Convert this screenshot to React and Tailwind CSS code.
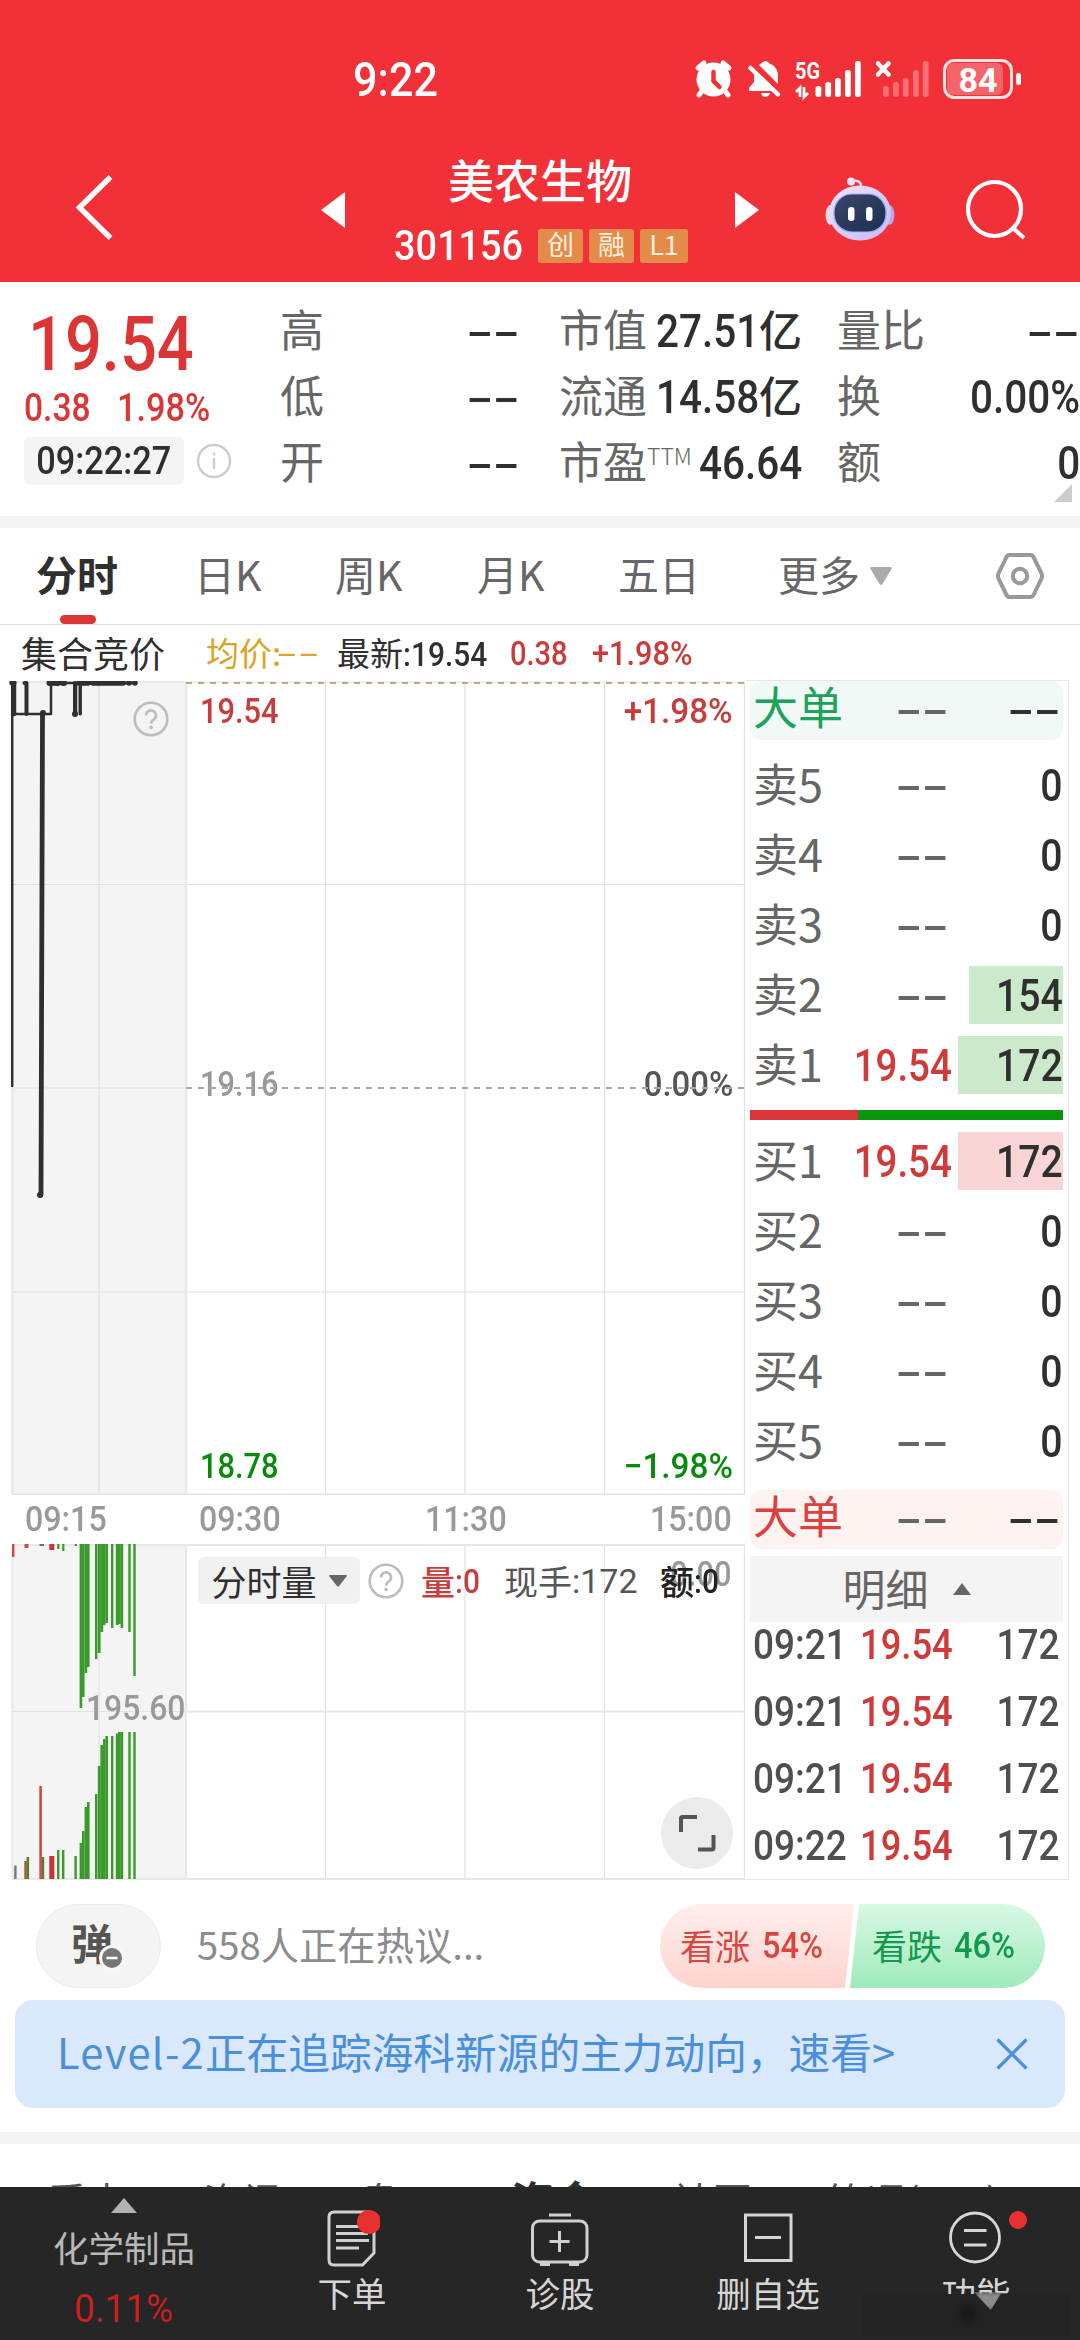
import clsx from "clsx";

const asks = [
  { label: "卖5", qty: "0" },
  { label: "卖4", qty: "0" },
  { label: "卖3", qty: "0" },
  { label: "卖2", qty: "154", bar: "w-[94px]" },
  { label: "卖1", price: "19.54", qty: "172", bar: "w-[105px]" },
];

const bids = [
  { label: "买1", price: "19.54", qty: "172", bar: "w-[105px]" },
  { label: "买2", qty: "0" },
  { label: "买3", qty: "0" },
  { label: "买4", qty: "0" },
  { label: "买5", qty: "0" },
];

const ticks = [
  ["09:21", "19.54", "172"],
  ["09:21", "19.54", "172"],
  ["09:21", "19.54", "172"],
  ["09:22", "19.54", "172"],
];

const RED = "#cf4a48";
const GREEN = "#3a9a2c";

// [x, width, height, color]
const unmatched = [
  [12, 2.4, 13, RED],
  [24.5, 4, 4, RED],
  [39.5, 4.5, 2, "#8a6a3a"],
  [49.3, 5, 6, "#c8343a"],
  [57.2, 2.2, 5, GREEN],
  [62.2, 2.2, 7, GREEN],
  [74.7, 2.2, 2, GREEN],
  [79.6, 2.6, 164, GREEN],
  [82, 2.6, 153, GREEN],
  [84.6, 2.6, 129, GREEN],
  [87, 2.6, 123, GREEN],
  [95, 2.4, 115, GREEN],
  [97.8, 2.8, 109, GREEN],
  [100.4, 2.8, 88, GREEN],
  [103, 2.6, 81, GREEN],
  [105.4, 2.6, 79, GREEN],
  [111, 2.4, 84, GREEN],
  [115.8, 2.6, 81, GREEN],
  [118, 2.8, 80, GREEN],
  [120.6, 2.6, 84, GREEN],
  [128.3, 2.4, 88, GREEN],
  [133.3, 2.4, 132, GREEN],
];

const matched = [
  [14.2, 2.4, 13.5, "#777"],
  [24.3, 2.5, 18, "#a8572c"],
  [26.6, 2.5, 22, "#5d7a2c"],
  [39.3, 2.6, 93, RED],
  [41.8, 2.4, 22, "#5d7a2c"],
  [49.3, 5, 23, "#c8343a"],
  [57, 2.4, 29, GREEN],
  [62, 2.4, 29, GREEN],
  [74.4, 2.4, 23, GREEN],
  [79.6, 2.6, 36, GREEN],
  [82, 2.6, 48, GREEN],
  [84.6, 2.6, 72, GREEN],
  [87, 2.6, 77, GREEN],
  [95, 2.4, 85, GREEN],
  [97.8, 2.8, 113, GREEN],
  [100.4, 2.8, 134, GREEN],
  [103, 2.6, 140, GREEN],
  [105.4, 2.6, 143, GREEN],
  [111, 2.4, 143, GREEN],
  [115.8, 2.6, 145.5, GREEN],
  [118, 2.8, 147, GREEN],
  [120.6, 2.6, 147, GREEN],
  [128.3, 2.4, 147, GREEN],
  [133.3, 2.4, 147, GREEN],
];

// condensed digits
const Num = ({ className, right, children }) => (
  <span
    className={clsx(
      "inline-block shrink-0 scale-x-[.88] whitespace-nowrap font-['Roboto','Noto_Sans_CJK_SC',sans-serif] font-medium leading-none",
      right ? "origin-right" : "origin-left",
      className
    )}
  >
    {children}
  </span>
);

const Dash = ({ className }) => (
  <span
    className={clsx(
      "inline-block origin-right scale-x-[2.35] font-['Liberation_Sans',sans-serif] text-[34px] font-bold leading-none",
      className
    )}
  >
    --
  </span>
);

const Question = ({ className }) => (
  <svg viewBox="0 0 36 36" className={clsx("h-9 w-9", className)} fill="none" stroke="#bdbdbd" strokeWidth="2.6">
    <circle cx="18" cy="18" r="16.3" />
    <path d="M13 14.5a5 5 0 1 1 7.6 4.2c-1.8 1.2-2.5 2-2.5 4" />
    <circle cx="18.1" cy="26.4" r="1.8" fill="#bdbdbd" stroke="none" />
  </svg>
);

const StatusBar = () => (
  <div className="flex h-[158px] items-start pt-[55px] text-white">
    <Num className="ml-[353px] w-[90px] text-[49px]">9:22</Num>
    <svg viewBox="690 55 336 48" className="ml-[247px] h-12 w-[336px] shrink-0" fill="#fff">
      <circle cx="713.5" cy="79.500" r="17" />
      <g stroke="#fff" strokeWidth="5" strokeLinecap="round" fill="none">
        <path d="M698 68l6-5M729 68l-6-5M702 91l-3 4M725 91l3 4" />
      </g>
      <path d="M713.500 72v9l6 6" stroke="#f13037" strokeWidth="4.500" strokeLinecap="round" fill="none" />
      <path d="M764.500 61c2.500 0 4 1 5 2.500 6 2 8.500 7 8.500 12.500v8l-19-19zM756 71l20.500 20H749v-3l5-6v-5c0-2.500.500-4 2-6zM761 93h9c-.8 5-8 5-9 0z" />
      <path d="M750.500 68l27.500 26.500" stroke="#fff" strokeWidth="4.500" strokeLinecap="round" />
      <path d="M796 92l4-4v9M804 87v10l4-4M808 87" stroke="#fff" strokeWidth="2.800" fill="none" />
      <rect x="815.500" y="86" width="5.800" height="11" rx="2.500" />
      <rect x="825.300" y="82" width="5.800" height="15" rx="2.500" />
      <rect x="835" y="78" width="5.800" height="19" rx="2.500" />
      <rect x="845" y="70" width="5.800" height="27" rx="2.500" />
      <rect x="855" y="61" width="5.800" height="36" rx="2.500" />
      <path d="M878 63.500l10.500 11M888.500 63.500L878 74.500" stroke="#fff" strokeWidth="4.600" strokeLinecap="round" />
      <g opacity=".3">
        <rect x="883" y="86" width="5.800" height="11" rx="2.500" />
        <rect x="893" y="82" width="5.800" height="15" rx="2.500" />
        <rect x="902.800" y="78" width="5.800" height="19" rx="2.500" />
        <rect x="913" y="70" width="5.800" height="27" rx="2.500" />
        <rect x="922.800" y="61" width="5.800" height="36" rx="2.500" />
      </g>
      <text x="795" y="79" fontFamily="Roboto" fontWeight="700" fontSize="24" textLength="25" lengthAdjust="spacingAndGlyphs">5G</text>
      <rect x="947" y="63" width="56" height="32" rx="6" opacity=".25" />
      <rect x="944.500" y="60.500" width="67" height="37" rx="10" fill="none" stroke="#ffe3e3" strokeWidth="3" />
      <rect x="1016" y="73" width="5" height="12" rx="2.500" />
      <text x="958.500" y="91.500" fontFamily="Roboto" fontWeight="700" fontSize="34">84</text>
    </svg>
  </div>
);

const Robot = () => (
  <svg viewBox="0 0 70 66" className="h-[66px] w-[70px]">
    <defs>
      <linearGradient id="shell" x1="0" y1="0" x2="1" y2="1">
        <stop offset="0" stopColor="#f4e2fb" />
        <stop offset="1" stopColor="#c9b8f5" />
      </linearGradient>
      <linearGradient id="face" x1="0" y1="0" x2="1" y2="1">
        <stop offset="0" stopColor="#3a4566" />
        <stop offset="1" stopColor="#1c2f52" />
      </linearGradient>
    </defs>
    <circle cx="26" cy="5.500" r="4" fill="#e7e4fb" />
    <path d="M27 5.500c5-2 10 0 9 7" fill="none" stroke="#f1d9ee" strokeWidth="2.500" />
    <ellipse cx="5.500" cy="39" rx="5" ry="10" fill="#f0d7ea" />
    <ellipse cx="64.500" cy="39" rx="5" ry="10" fill="#b9a4e8" />
    <ellipse cx="35" cy="37" rx="31" ry="27.500" fill="url(#shell)" />
    <rect x="9" y="18" width="52" height="38" rx="18" fill="url(#face)" stroke="#8fb4ff" strokeWidth="1.200" />
    <rect x="23" y="31" width="6.500" height="14" rx="3.200" fill="#fff" />
    <rect x="41" y="31" width="6.500" height="14" rx="3.200" fill="#fff" />
  </svg>
);

const Header = () => (
  <header className="h-[282px] bg-[#f13037]">
    <StatusBar />
    <div className="flex h-[124px] items-start text-white">
      <svg viewBox="0 0 40 68" className="ml-[75px] mt-[15px] h-[68px] w-10" fill="none" stroke="#fff" strokeWidth="5.500">
        <path d="M35.500 4L4.500 34.500l31 30.500" />
      </svg>
      <svg viewBox="0 0 24 36" className="ml-[206px] mt-[34px] h-9 w-6" fill="#fff">
        <path d="M24 0v36L0 18z" />
      </svg>
      <div className="flex w-[390px] flex-col items-center">
        <h1 className="-mt-[3px] text-[46px] font-medium leading-[46px]">美农生物</h1>
        <div className="mt-[23px] flex items-center gap-1.5 pl-0.5 text-[27px] text-[#fff0dc]">
          <Num className="w-[138px] text-[43px] text-white">301156</Num>
          <span className="flex h-[34px] w-[45px] items-center justify-center rounded-[3px] bg-[#e58b4a] pb-1 leading-none">创</span>
          <span className="flex h-[34px] w-[45px] items-center justify-center rounded-[3px] bg-[#e58b4a] pb-1 leading-none">融</span>
          <span className="flex h-[34px] w-12 items-center justify-center rounded-[3px] bg-[#e58b4a] pb-1 leading-none">L1</span>
        </div>
      </div>
      <svg viewBox="0 0 24 36" className="mt-[34px] h-9 w-6" fill="#fff">
        <path d="M0 0v36l24-18z" />
      </svg>
      <div className="ml-[66px] mt-[18px]">
        <Robot />
      </div>
      <svg viewBox="0 0 62 62" className="ml-[70px] mt-5 h-[62px] w-[62px]" fill="none" stroke="#fff" strokeWidth="4.200">
        <ellipse cx="29.500" cy="31" rx="26.500" ry="27" />
        <path d="M48 50l11 10" />
      </svg>
    </div>
  </header>
);

const Stat = ({ label, value, unit, sup }) => (
  <div className="flex h-[66px] items-center text-[#2f2f2f]">
    <span className="-mt-1.5 flex shrink-0 items-start whitespace-nowrap text-[44px] leading-none text-[#666]">
      {label}
      {sup && <sup className="top-0 mt-1.5 text-[23px] font-light leading-none">{sup}</sup>}
    </span>
    <span className="flex w-0 flex-1 items-center justify-end">
      {value ? (
        <Num right className="text-[46px]">
          {value}
        </Num>
      ) : (
        <Dash />
      )}
      {unit && <span className="-mt-1.5 text-[43px] font-medium leading-none">{unit}</span>}
    </span>
  </div>
);

const Quote = () => (
  <section className="relative flex h-[234px] pt-4">
    <div className="w-[280px] pl-6 text-[#dc3535]">
      <Num className="ml-1 mt-2 !scale-x-[.855] text-[76px]">19.54</Num>
      <div className="mt-[7px] flex text-[39px] leading-none">
        <Num className="w-[93px] !scale-x-[.86]">0.38</Num>
        <Num>1.98%</Num>
      </div>
      <div className="mt-[9px] flex items-center">
        <span className="flex h-12 w-40 items-center justify-center rounded-md bg-[#f4f4f4]">
          <Num className="!origin-center text-[39px] text-[#2f2f2f]">09:22:27</Num>
        </span>
        <svg viewBox="0 0 36 36" className="ml-3 h-9 w-9" fill="none" stroke="#ccc" strokeWidth="2.400">
          <circle cx="18" cy="18" r="16" />
          <path d="M18 15v11M18 9.500v3" />
        </svg>
      </div>
    </div>
    <div className="w-[240px]">
      <Stat label="高" />
      <Stat label="低" />
      <Stat label="开" />
    </div>
    <div className="ml-[39px] w-[243px]">
      <Stat label="市值" value="27.51" unit="亿" />
      <Stat label="流通" value="14.58" unit="亿" />
      <Stat label="市盈" sup="TTM" value="46.64" />
    </div>
    <div className="ml-[35px] w-[243px]">
      <Stat label="量比" />
      <Stat label="换" value="0.00%" />
      <Stat label="额" value="0" />
    </div>
    <svg viewBox="0 0 18 18" className="absolute bottom-[14px] right-2 h-[18px] w-[18px]" fill="#ccc">
      <path d="M18 0v18H0z" />
    </svg>
  </section>
);

const PeriodTabs = () => (
  <nav className="flex h-[97px] items-center border-b border-[#e2e2e2] pl-9 text-[41px] leading-none text-[#666]">
    <span className="relative flex h-full w-[158px] items-center pb-[5px] font-bold text-[#2f2f2f]">
      分时
      <i className="absolute bottom-0 left-6 h-[9px] w-9 rounded-full bg-[#dc3535]" />
    </span>
    <span className="-mt-[5px] w-[141px]">日K</span>
    <span className="-mt-[5px] w-[142px]">周K</span>
    <span className="-mt-[5px] w-[141px]">月K</span>
    <span className="-mt-[5px] w-[160px]">五日</span>
    <span className="-mt-[5px] flex w-[217px] items-center gap-2.5">
      更多
      <svg viewBox="0 0 22 18" className="mt-1 h-[18px] w-[22px]" fill="#aaa">
        <path d="M1.500 0h19q2 0 1 2l-9 15q-1.500 2-3 0L.5 2Q-.5 0 1.500 0z" />
      </svg>
    </span>
    <svg viewBox="0 0 50 48" className="h-12 w-[50px]" fill="none" stroke="#999" strokeWidth="4" strokeLinejoin="round">
      <path d="M14.500 3h21q2 0 3 2l8 16.500q1.200 2.500 0 5l-8 16.500q-1 2-3 2h-21q-2 0-3-2l-8-16.500q-1.200-2.500 0-5l8-16.500q1-2 3-2z" />
      <circle cx="25" cy="24" r="7.200" />
    </svg>
  </nav>
);

const Legend = () => (
  <div className="flex h-[55px] items-center text-[33px] leading-none">
    <span className="-mt-0.5 ml-[21px] w-[185px] text-[36px] text-[#2f2f2f]">集合竞价</span>
    <span className="flex w-[131px] items-center text-[#d9a428]">
      均价:
      <Dash className="ml-[20px] !text-[28px] !font-normal" />
    </span>
    <span className="flex w-[173px] items-center text-[#2f2f2f]">
      最新
      <Num className="mt-0.5 text-[34px]">:19.54</Num>
    </span>
    <Num className="mt-0.5 w-[82px] text-[#c93c3c]">0.38</Num>
    <Num className="mt-0.5 !scale-x-[.93] text-[#c93c3c]">+1.98%</Num>
  </div>
);

const PriceChart = () => (
  <div className="relative h-[814px] w-[745px]">
    <svg viewBox="0 681 745 814" className="h-[814px] w-[745px]">
      <rect x="12" y="681" width="174" height="814" fill="#f4f4f4" />
      <g stroke="#e0e0e0" strokeWidth="1.200" fill="none">
        <path d="M12 682H745M12 884.500H745M12 1088H187M12 1292H745M99 682v813M325.500 682v813M465 682v813M604.500 682v813M744.500 682v813" />
        <path d="M12.500 1088v406M186 682v813" strokeWidth="2.500" stroke="#e8e8e8" />
        <path d="M12 1494.500H745" stroke="#e4e4e4" strokeWidth="2" />
      </g>
      <path d="M186 683H745" stroke="#bda97c" strokeWidth="2" strokeDasharray="6 6" />
      <g fill="none" stroke="#2f2f2f" strokeLinecap="round" strokeLinejoin="round">
        <path d="M12.200 683V1086" strokeWidth="2.500" />
        <path d="M11.500 683h3M14 683v31" strokeWidth="4.500" />
        <path d="M15 714h36V683h25v31M80.500 714V683" strokeWidth="2.500" />
        <path d="M24.500 683h2v31M75 683v31h0" strokeWidth="4" />
        <path d="M80 684v30" strokeWidth="3" />
        <path d="M42.500 714L41 1195" strokeWidth="4.800" />
        <path d="M40 1195h0M43 713h0M75 714h0M49.500 683h3M56 683h2M63 683h1" strokeWidth="6" />
        <path d="M79 683h9M93 683h30M129 683h0M135 683h0" strokeWidth="5.500" />
        <path d="M79 683h56" strokeWidth="3" />
      </g>
    </svg>
    <Question className="absolute left-[133px] top-5" />
    <Num className="absolute left-[200px] top-[13px] text-[35px] text-[#c93c3c]">19.54</Num>
    <Num right className="absolute right-3 top-[13px] !scale-x-[.95] text-[35px] text-[#c93c3c]">+1.98%</Num>
    <Num className="absolute left-[200px] top-[386px] text-[35px] text-[#999]">19.16</Num>
    <Num right className="absolute right-3 top-[386px] !scale-x-[.94] text-[35px] text-[#555]">0.00%</Num>
    <Num className="absolute bottom-[11px] left-[200px] text-[35px] text-[#0a8a0a]">18.78</Num>
    <Num right className="absolute bottom-[11px] right-3 !scale-x-[.95] text-[35px] text-[#0a8a0a]">−1.98%</Num>
    <svg viewBox="0 0 559 2" className="absolute left-[186px] top-[406px] h-0.5 w-[559px]">
      <path d="M0 1H559" stroke="#a6a6a6" strokeWidth="2" strokeDasharray="6 6" />
    </svg>
  </div>
);

const TimeAxis = () => (
  <div className="flex h-[49px] items-center text-[35px] text-[#999]">
    <Num className="ml-[25px] w-[174px] !scale-x-[.92]">09:15</Num>
    <Num className="w-[226px] !scale-x-[.92]">09:30</Num>
    <Num className="w-[225px] !scale-x-[.92]">11:30</Num>
    <Num className="!scale-x-[.92]">15:00</Num>
  </div>
);

const VolumeChart = () => (
  <div className="relative h-[336px] w-[745px]">
    <svg viewBox="0 1544 745 336" className="h-[336px] w-[745px]">
      <rect x="12" y="1545" width="174" height="334" fill="#f4f4f4" />
      <g stroke="#e2e2e2" strokeWidth="1.200" fill="none">
        <path d="M99 1545v334M325.500 1545v334M465 1545v334M604.500 1545v334M744.500 1545v334M12 1711.500H187" />
        <path d="M12 1545H745M187 1711.500H745M12 1879H745M186 1545v334M12.500 1545v334" strokeWidth="2.200" stroke="#e8e8e8" />
      </g>
      {unmatched.map(([x, w, h, fill]) => (
        <rect key={x} x={x} y="1544" width={w} height={h} fill={fill} />
      ))}
      {matched.map(([x, w, h, fill]) => (
        <rect key={x} x={x} y={1879 - h} width={w} height={h} fill={fill} />
      ))}
    </svg>
    <Num className="absolute left-[86px] top-[147px] !scale-x-[.91] text-[35px] text-[#999]">195.60</Num>
    <Num right className="absolute right-[14px] top-[13px] text-[35px] text-[#999]">0.00</Num>
    <div className="absolute left-[198px] top-[13px] flex h-[47px] items-center text-[34px] leading-none">
      <span className="flex h-[47px] w-[162px] items-center justify-center gap-3 rounded-md bg-[#f0f0f0]/90 text-[35px] text-[#2f2f2f]">
        分时量
        <svg viewBox="0 0 18 12" className="h-3 w-[18px]" fill="#666">
          <path d="M1 0h16q1.500 0 .5 1.500L10 11q-1 1.200-2 0L.5 1.500Q-.5 0 1 0z" />
        </svg>
      </span>
      <Question className="ml-2" />
      <span className="ml-[17px] flex w-[83px] items-center font-medium text-[#c93c3c]">
        量<Num>:0</Num>
      </span>
      <span className="flex w-[156px] items-center text-[#555]">
        现手<Num className="!scale-x-100 !font-normal">:172</Num>
      </span>
      <span className="flex items-center font-medium text-[#222]">
        额<Num>:0</Num>
      </span>
    </div>
    <span className="absolute bottom-[11px] right-[12px] flex h-[72px] w-[72px] items-center justify-center rounded-full bg-[#ebebeb]">
      <svg viewBox="0 0 38 38" className="h-[38px] w-[38px]" fill="none" stroke="#555" strokeWidth="4">
        <path d="M3 18V4.500Q3 3 4.500 3H19M35.500 21v13q0 1.500-1.500 1.500H20" />
      </svg>
    </span>
  </div>
);

const BigOrder = ({ className }) => (
  <div className={clsx("flex h-[59px] items-center rounded-xl text-[45px] leading-none", className)}>
    <span className="-mt-2.5 w-[150px] pl-[3px]">大单</span>
    <span className="flex w-[49px] justify-end text-[#666]">
      <Dash className="-mt-1" />
    </span>
    <span className="flex flex-1 justify-end pr-0.5 text-[#2f2f2f]">
      <Dash className="-mt-1" />
    </span>
  </div>
);

const BookRow = ({ label, price, qty, bar, tint }) => (
  <div className="flex h-[70px] items-center text-[45px] leading-none">
    <span className="-mt-1.5 w-[100px] pl-[3px] text-[#666]">{label}</span>
    <span className="flex w-[100px] justify-end pr-px text-[#666]">
      {price ? (
        <Num right className="-mr-[3px] !scale-x-[.855] text-[45px] text-[#d03a3a]">
          {price}
        </Num>
      ) : (
        <Dash />
      )}
    </span>
    <span className="flex flex-1 justify-end">
      <span className={clsx("flex h-[58px] items-center justify-end", bar, bar && tint)}>
        <Num right className="!scale-x-[.87] text-[45px] text-[#2f2f2f]">
          {qty}
        </Num>
      </span>
    </span>
  </div>
);

const OrderBook = () => (
  <aside className="-mt-px h-[1200px] w-[324px] border-y border-r border-[#e6e6e6] pl-[5px] pr-[5px]">
    <BigOrder className="bg-[#f0f9f5] text-[#1ba35a]" />
    <div className="mt-[10px]">
      {asks.map((row) => (
        <BookRow key={row.label} tint="bg-[#cbe9cb]" {...row} />
      ))}
    </div>
    <div className="mt-[10px] flex h-[10px]">
      <i className="w-[108px] bg-[#dc3535]" />
      <i className="flex-1 bg-[#0a960a]" />
    </div>
    <div className="mt-[6px]">
      {bids.map((row) => (
        <BookRow key={row.label} tint="bg-[#f9d5d5]" {...row} />
      ))}
    </div>
    <BigOrder className="mt-[14px] bg-[#fff3f1] text-[#d9423f]" />
    <div className="mt-[7px] flex h-[66px] items-center justify-center gap-6 bg-[#f4f4f4] text-[43px] leading-none text-[#666]">
      <span className="-mt-1">明细</span>
      <svg viewBox="0 0 18 12" className="h-3 w-[18px]" fill="#666">
        <path d="M9 0l9 12H0z" />
      </svg>
    </div>
    <div className="-mt-[11px]">
      {ticks.map(([time, price, qty], i) => (
        <div key={i} className="flex h-[67px] items-center text-[42px] leading-none">
          <Num className="ml-[3px] w-[107px]">
            <span className="text-[#4f4f4f]">{time}</span>
          </Num>
          <Num className="!scale-x-[.865] text-[#d03a3a]">{price}</Num>
          <Num right className="ml-auto mr-[3px] text-[#4f4f4f]">{qty}</Num>
        </div>
      ))}
    </div>
  </aside>
);

const Chat = () => (
  <div className="flex h-[84px] items-center leading-none">
    <span className="relative ml-9 flex h-[84px] w-[125px] items-center rounded-full border border-[#ececec] bg-[#f4f4f4] pb-2 pl-[34px] text-[42px] font-bold text-[#555]">
      弹
      <svg viewBox="0 0 26 26" className="absolute left-[62px] top-[40px] h-[26px] w-[26px]">
        <circle cx="13" cy="13" r="11.500" fill="#777" stroke="#f7f7f7" strokeWidth="3" />
        <path d="M7.500 13h11" stroke="#fff" strokeWidth="2.500" />
      </svg>
    </span>
    <span className="-mt-1 ml-[36px] w-[463px] text-[38.3px] text-[#8c8c8c]">558人正在热议...</span>
    <div className="relative flex h-[84px] w-[385px] overflow-hidden rounded-full text-[35px]">
      <svg viewBox="0 0 385 84" className="absolute inset-0 h-[84px] w-[385px]">
        <defs>
          <linearGradient id="up" x1="0" y1="0" x2="0" y2="1">
            <stop offset="0" stopColor="#ffefec" />
            <stop offset="1" stopColor="#ffd3ce" />
          </linearGradient>
          <linearGradient id="down" x1="0" y1="0" x2="0" y2="1">
            <stop offset="0" stopColor="#d9f8e4" />
            <stop offset="1" stopColor="#9eebbc" />
          </linearGradient>
        </defs>
        <path d="M0 0h194l-9 84H0z" fill="url(#up)" />
        <path d="M199 0h186v84H190z" fill="url(#down)" />
      </svg>
      <span className="relative flex h-20 w-[192px] items-center gap-3 pl-5 text-[#d9463f]">
        看涨 <Num className="mt-0.5 text-[37px]">54%</Num>
      </span>
      <span className="relative flex h-20 items-center gap-3 pl-5 text-[#12994d]">
        看跌 <Num className="mt-0.5 text-[37px]">46%</Num>
      </span>
    </div>
  </div>
);

const Banner = () => (
  <div className="mx-[15px] mt-3 flex h-[108px] items-center justify-between rounded-[18px] bg-[#d9e8fb] pl-[42px] pr-[37px] text-[#4a8fdc]">
    <p className="-mt-1 whitespace-nowrap text-[41.7px] leading-none">
      <span className="tracking-[1.2px]">Level-2</span>正在追踪海科新源的主力动向，速看&gt;
    </p>
    <svg viewBox="0 0 32 32" className="h-8 w-8" fill="none" stroke="#4a8fdc" strokeWidth="3.200">
      <path d="M1.500 1.500l29 29M30.500 1.500l-29 29" />
    </svg>
  </div>
);

const InfoTabs = () => (
  <div className="h-[43px] overflow-hidden">
    <div className="flex items-start pl-[47px] pt-[36px] text-[40px] leading-none text-[#555]">
      <span className="w-[156px]">看点</span>
      <span className="w-[156px]">资讯</span>
      <span className="w-[152px]">盘口</span>
      <span className="-mt-0.5 w-[161px] text-[43px] font-bold text-[#2f2f2f]">资金</span>
      <span className="w-[154px]">社区</span>
      <span>简况(F10)</span>
    </div>
  </div>
);

const NavItem = ({ label, children }) => (
  <div className="relative flex w-[208px] flex-col items-center text-[34.5px] leading-none text-[#d6d6d6]">
    <div className="mt-[22px] h-[66px]">{children}</div>
    {label}
  </div>
);

const BottomNav = () => (
  <footer className="relative flex h-[153px] overflow-hidden bg-[#262626]">
    <div className="flex w-[248px] flex-col items-center text-[35.5px] leading-none text-[#b8b8b8]">
      <svg viewBox="0 0 26 15" className="mt-[11px] h-[15px] w-[26px]" fill="#b3b3b3">
        <path d="M13 0l13 15H0z" />
      </svg>
      <span className="mt-4">化学制品</span>
      <Num className="mt-[25px] !origin-center !scale-x-[.97] text-[38px] !font-normal text-[#cc1f1f]">0.11%</Num>
    </div>
    <NavItem label="下单">
      <svg viewBox="0 0 56 58" className="h-[58px] w-14">
        <g fill="none" stroke="#d0d0d0" strokeWidth="3">
          <path d="M10 3h35q5 0 5 5v36L38.500 56H10q-5 0-5-5V8q0-5 5-5z" />
          <path d="M12 17.500h32M12 24.500h32M12 31.500h33M12 39h23" strokeWidth="2.800" />
        </g>
        <circle cx="45" cy="13" r="12" fill="#e93030" />
      </svg>
    </NavItem>
    <NavItem label="诊股">
      <svg viewBox="0 0 58 58" className="h-[58px] w-[58px]" fill="none" stroke="#d0d0d0" strokeWidth="3">
        <path d="M18 6h22" />
        <rect x="1.500" y="12" width="54.500" height="41" rx="7" />
        <path d="M28.500 22v21M18.500 32.500h20" />
        <path d="M9 55h10M38 55h10" strokeWidth="4" />
      </svg>
    </NavItem>
    <NavItem label="删自选">
      <svg viewBox="0 0 50 58" className="h-[58px] w-[50px]" fill="none" stroke="#d6d6d6" strokeWidth="3">
        <rect x="2.500" y="6" width="45.500" height="45.500" />
        <path d="M12 28.500h26" />
      </svg>
    </NavItem>
    <NavItem label="功能">
      <svg viewBox="0 0 54 58" className="h-[58px] w-[54px]" fill="none" stroke="#d6d6d6" strokeWidth="2.800">
        <circle cx="26" cy="28.500" r="24.500" />
        <path d="M15 21.500h22.500M15 36h22.500" />
      </svg>
      <i className="absolute left-[137px] top-6 h-[18px] w-[18px] rounded-full bg-[#e93030]" />
    </NavItem>
    <div className="absolute bottom-1 right-2.5 h-[42px] w-[208px] bg-[#242424]">
      <i className="absolute left-[112px] top-[-2px] h-[18px] w-7 bg-[#8a8a8a] blur-[2px] [clip-path:polygon(0_0,100%_0,60%_100%)]" />
      <i className="absolute left-[98px] top-3 h-4 w-4 rounded-full bg-[#151515] blur-[4px]" />
    </div>
  </footer>
);

export default function App() {
  return (
    <div className="h-[2340px] w-[1080px] overflow-hidden bg-white font-['Noto_Sans_CJK_SC','Noto_Sans',sans-serif]">
      <Header />
      <Quote />
      <div className="h-3 bg-[#f4f4f4]" />
      <PeriodTabs />
      <Legend />
      <main className="mt-px flex h-[1199px]">
        <div className="w-[745px]">
          <PriceChart />
          <TimeAxis />
          <VolumeChart />
        </div>
        <OrderBook />
      </main>
      <div className="pt-6">
        <Chat />
        <Banner />
      </div>
      <div className="mt-6 h-3 bg-[#f4f4f4]" />
      <InfoTabs />
      <BottomNav />
    </div>
  );
}
